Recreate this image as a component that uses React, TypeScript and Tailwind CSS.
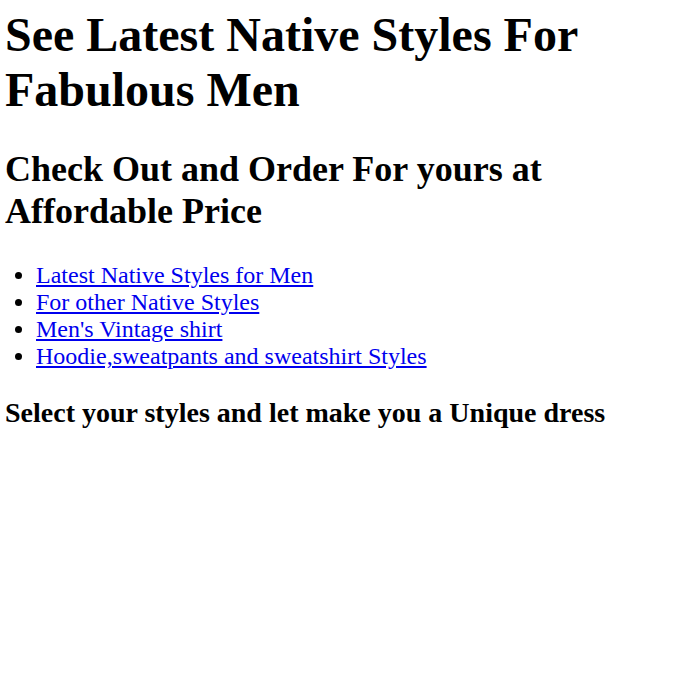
export default function App() {
  return (
    <div
      className="pl-[5px] pt-[7px] text-black bg-white min-h-[696px]"
      style={{ fontFamily: '"Liberation Serif", "Times New Roman", serif' }}
    >
      <h1 className="text-[48px] font-bold leading-[1.149] m-0">
        See Latest Native Styles For Fabulous Men
      </h1>
      <h2 className="text-[36px] font-bold leading-[1.149] mt-[32px]">
        Check Out and Order For yours at Affordable Price
      </h2>
      <ul className="list-disc pl-[31px] mt-[30px] text-[24px] leading-[27px]">
        <li>
          <a href="#" className="text-[#0000ee] underline">Latest Native Styles for Men</a>
        </li>
        <li>
          <a href="#" className="text-[#0000ee] underline">For other Native Styles</a>
        </li>
        <li>
          <a href="#" className="text-[#0000ee] underline">Men's Vintage shirt</a>
        </li>
        <li>
          <a href="#" className="text-[#0000ee] underline">Hoodie,sweatpants and sweatshirt Styles</a>
        </li>
      </ul>
      <h3 className="text-[28px] font-bold leading-[1.149] mt-[27px]">
        Select your styles and let make you a Unique dress
      </h3>
    </div>
  );
}
